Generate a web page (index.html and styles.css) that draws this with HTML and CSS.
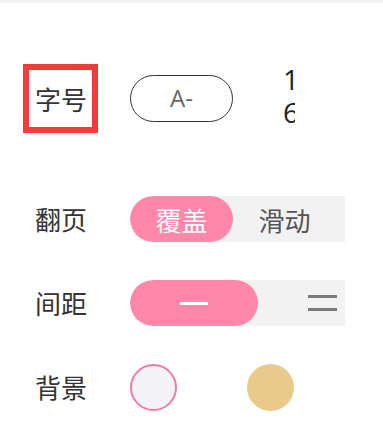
FILE: index.html
```html
<!DOCTYPE html>
<html lang="zh-CN">
<head>
    <meta charset="UTF-8">
    <meta name="viewport" content="width=device-width, initial-scale=1.0">
    <title>阅读设置</title>
    <link rel="stylesheet" href="styles.css">
</head>
<body>
    <div class="top-bar"></div>

    <div class="panel">
        <div class="row row-size">
            <div class="label label-active">字号</div>
            <button class="size-btn">A-</button>
            <div class="size-value">16</div>
        </div>

        <div class="row">
            <div class="label">翻页</div>
            <div class="seg">
                <span class="seg-item seg-page active">覆盖</span>
                <span class="seg-item seg-page">滑动</span>
            </div>
        </div>

        <div class="row">
            <div class="label">间距</div>
            <div class="seg">
                <span class="seg-item seg-space active"><i class="bar"></i></span>
                <span class="seg-item seg-space"><i class="bar"></i><i class="bar"></i></span>
            </div>
        </div>

        <div class="row">
            <div class="label">背景</div>
            <div class="swatches">
                <span class="swatch swatch-light selected"></span>
                <span class="swatch swatch-yellow"></span>
            </div>
        </div>
    </div>
</body>
</html>
```

FILE: styles.css
```css
body {
    margin: 0;
    background: #fff;
    font-family: "Noto Sans CJK SC", "Noto Sans", sans-serif;
    color: #333;
}
.top-bar {
    height: 3px;
    background: #f3f3f3;
}
.panel {
    padding: 61px 0 0 23px;
}
.row {
    display: flex;
    align-items: center;
    height: 46px;
    margin-bottom: 38px;
}
.row-size {
    height: 69px;
    margin-bottom: 63px;
}
.label {
    box-sizing: border-box;
    width: 75px;
    margin-right: 32px;
    padding-left: 12px;
    font-size: 26px;
    line-height: 46px;
    color: #333;
}
.label-active {
    height: 69px;
    padding-left: 6px;
    line-height: 57px;
    border: 6px solid #f33b3b;
}
.size-btn {
    box-sizing: border-box;
    width: 103px;
    height: 47px;
    padding: 0 0 1px;
    border: 1.5px solid #333;
    border-radius: 24px;
    background: #fff;
    font-family: "Open Sans", "Noto Sans", sans-serif;
    font-size: 24px;
    line-height: 1;
    color: #666;
}
.size-value {
    width: 12px;
    margin: -5px 0 0 50px;
    font-family: "Open Sans", "Noto Sans", sans-serif;
    font-size: 28px;
    line-height: 33px;
    color: #222;
    word-break: break-all;
    overflow: hidden;
}
.seg {
    display: flex;
    width: 215px;
    height: 46px;
    background: #f2f2f2;
    border-radius: 23px 0 0 23px;
    overflow: hidden;
}
.seg-item {
    flex: none;
    display: flex;
    flex-direction: column;
    align-items: center;
    justify-content: center;
    height: 46px;
    border-radius: 23px;
    font-size: 26px;
    color: #555;
}
.seg-page {
    width: 103px;
}
.seg-space {
    width: 128px;
    gap: 10px;
}
.seg-item.active {
    background: #ff87aa;
    color: #fff;
}
.bar {
    display: block;
    width: 29px;
    height: 3px;
    background: #7a7a7a;
}
.seg-space.active .bar {
    width: 28px;
    background: #fff;
}
.swatches {
    display: flex;
    gap: 70px;
}
.swatch {
    box-sizing: border-box;
    width: 47px;
    height: 47px;
    border-radius: 50%;
}
.swatch-light {
    background: #f4f4f8;
}
.swatch-light.selected {
    border: 2px solid #f27ba4;
}
.swatch-yellow {
    background: #e9ca8b;
}
```
